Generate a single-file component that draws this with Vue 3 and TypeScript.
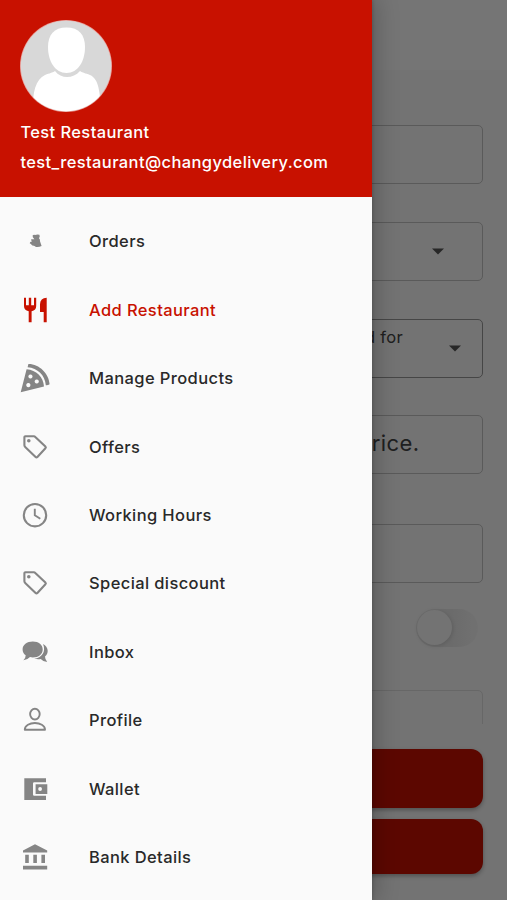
<script setup lang="ts">
import { ref } from 'vue'

interface MenuItem {
  label: string
  icon: string
}

const items: MenuItem[] = [
  { label: 'Orders', icon: 'orders' },
  { label: 'Add Restaurant', icon: 'restaurant' },
  { label: 'Manage Products', icon: 'pizza' },
  { label: 'Offers', icon: 'tag' },
  { label: 'Working Hours', icon: 'clock' },
  { label: 'Special discount', icon: 'tag' },
  { label: 'Inbox', icon: 'chat' },
  { label: 'Profile', icon: 'person' },
  { label: 'Wallet', icon: 'wallet' },
  { label: 'Bank Details', icon: 'bank' },
]
const active = ref('Add Restaurant')
</script>

<template>
  <div class="screen">
    <main class="page">
      <div class="appbar"></div>
      <div class="form">
        <div class="field"></div>
        <div class="field select">
          <svg class="caret near" viewBox="0 0 12 7"><path d="M0 .5h12L6 6.5z" /></svg>
        </div>
        <div class="field select strong">
          <span class="hint">Services you need for</span>
          <svg class="caret" viewBox="0 0 12 7"><path d="M0 .5h12L6 6.5z" /></svg>
        </div>
        <div class="field price"><span>price.</span></div>
        <div class="field spaced"></div>
        <div class="switch"><span class="knob"></span></div>
        <div class="card"></div>
      </div>
      <div class="actions">
        <button class="save"></button>
        <button class="second"></button>
      </div>
    </main>
    <div class="scrim"></div>
    <aside class="drawer">
      <header class="head">
        <svg class="avatar" viewBox="0 0 92 92">
          <defs><clipPath id="round"><circle cx="46" cy="46" r="45.2" /></clipPath></defs>
          <circle cx="46" cy="46" r="46" fill="#eaa09a" />
          <g clip-path="url(#round)">
            <rect width="92" height="92" fill="#d8d8d8" />
            <path d="M13 92C12 72 16 59 25 55C30 53 32 53 35 51C41 59 53 59 60 51C63 53 65 53 70 55C79 59 80 72 81 92Z" fill="#fff" />
            <path d="M46.5 7.5C59 7.5 65 15 65 27C65 41 58 53 46.5 53C35 53 28 41 28 27C28 15 34 7.5 46.5 7.5Z" fill="#fff" />
          </g>
        </svg>
        <div class="name">Test Restaurant</div>
        <div class="mail">test_restaurant@changydelivery.com</div>
      </header>
      <nav class="menu">
        <a v-for="item in items" :key="item.label" class="item" :class="{ active: item.label === active }" @click="active = item.label">
          <svg class="icon" viewBox="0 0 30 30">
            <path v-if="item.icon === 'orders'" d="M12.6 9.6Q13.2 8.6 15 8.9Q17.5 8.2 19.4 8.8Q20.3 10.5 19 12.2Q20.3 13.4 20 15.2L21.6 20Q19 21.4 16 21Q14.5 19.2 12.3 19.4Q10.8 17.8 9.7 17.2Q9.9 15.2 12 15.4Q10.8 13.9 11.2 13.2L14.4 13.2Q12.2 11.5 12.6 9.6Z" />
            <template v-else-if="item.icon === 'restaurant'">
              <path d="M4 2.7H6V10.3H8.8V2.7H11.2V10.3H14V2.7H16.2V11Q16.2 15.2 11.6 16.2V27.3H8.7V16.2Q4 15.2 4 11Z" />
              <path d="M26.7 2.7V27.3H23.7V17H20V9.2Q20.2 3 26.7 2.7Z" />
            </template>
            <template v-else-if="item.icon === 'pizza'">
              <path d="M8.4.9C19 .7 29.2 10.5 29.6 21.3Q27.8 22.6 25.8 22.3C25 12 17.6 5.2 7.6 4.3Z" />
              <path fill-rule="evenodd" d="M6.6 6.2C16.2 7 23.4 13.8 24 23.5L.7 29.2ZM10.4 11.4a2.1 2.1 0 1 0 .1 0ZM16.7 16.4a2.1 2.1 0 1 0 .1 0ZM8.3 20a2.1 2.1 0 1 0 .1 0Z" />
            </template>
            <g v-else-if="item.icon === 'tag'">
              <path class="line" d="M5.4 4.3H13.9Q14.7 4.3 15.3 4.9L25.4 14.5Q26.3 15.4 25.4 16.3L17.4 25Q16.5 25.9 15.6 25L5.2 14.9Q4.4 14.2 4.4 13.3V5.3Q4.4 4.3 5.4 4.3Z" />
              <circle cx="8.8" cy="8.7" r="1.8" />
            </g>
            <g v-else-if="item.icon === 'clock'">
              <circle class="line" cx="15" cy="15.2" r="11.2" />
              <path class="line thin" d="M14.8 8.7V15.3L20.3 18.8" />
            </g>
            <template v-else-if="item.icon === 'chat'">
              <path d="M12.8 4.4C18.8 4.4 22.7 7.9 22.7 12.4C22.7 17 18.8 20.4 12.8 20.4Q11.4 20.4 10 20.1Q7.3 23.2 3.4 23.2Q5.8 20.8 5.7 18.3Q2.6 16 2.6 12.4C2.6 7.9 6.8 4.4 12.8 4.4Z" />
              <path d="M23 6.9C28.8 10 29 16.2 25 19.5Q24.9 22 27.2 24.9Q22.8 24.6 20.7 22Q17.6 22.5 14.2 21.6C21.5 21 26.4 14.6 23 6.9Z" />
            </template>
            <g v-else-if="item.icon === 'person'">
              <ellipse class="line thin" cx="14.9" cy="9.1" rx="4.8" ry="5.4" />
              <path class="line thin" stroke-linejoin="round" d="M4.8 24.8C4.8 15.8 25 15.8 25 24.8Z" />
            </g>
            <path v-else-if="item.icon === 'wallet'" fill-rule="evenodd" d="M4.3 4.2H26V8.2H14.2Q13 8.2 13 9.4V20.6Q13 21.8 14.2 21.8H26V26H4.3ZM15.6 10.2H27.3V19.9H15.6ZM18.2 15a1.9 1.9 0 1 0 3.8 0a1.9 1.9 0 1 0-3.8 0Z" />
            <path v-else d="M15 2.2L27.2 8.4V10.6H3V8.4ZM5.2 12.8H8.8V21H5.2ZM13.3 12.8H16.9V21H13.3ZM21.4 12.8H25V21H21.4ZM3 23.7H27.2V27.4H3Z" />
          </svg>
          <span class="label">{{ item.label }}</span>
        </a>
      </nav>
    </aside>
  </div>
</template>

<style>
body {
  margin: 0;
  overflow: hidden;
}
</style>

<style scoped>
.screen {
  position: relative;
  width: 507px;
  height: 900px;
  overflow: hidden;
  font-family: Inter, 'Liberation Sans', sans-serif;
}
.page {
  display: flex;
  flex-direction: column;
  box-sizing: border-box;
  height: 900px;
  background: #fafafa;
}
.appbar {
  flex: none;
  height: 70px;
  background: #fff;
}
.form {
  display: flex;
  flex-direction: column;
  flex: none;
  box-sizing: border-box;
  height: 654px;
  padding: 55px 24.5px 0;
  overflow: hidden;
}
.field {
  flex: none;
  box-sizing: border-box;
  height: 59px;
  margin-bottom: 38px;
  border: 1.5px solid #c4c4c4;
  border-radius: 5px;
}
.select {
  display: flex;
  justify-content: flex-end;
  align-items: center;
  padding-right: 20.5px;
  margin-bottom: 37.5px;
}
.select.strong {
  gap: 46px;
  border-color: #989898;
}
.hint {
  align-self: flex-start;
  margin-top: 7px;
  font-size: 16.5px;
  line-height: 20px;
  letter-spacing: 0.3px;
  color: #444;
}
.caret {
  width: 12px;
  height: 7px;
  fill: #555;
}
.caret.near {
  margin-right: 17px;
}
.price {
  display: flex;
  justify-content: flex-end;
  align-items: center;
  padding-right: 62px;
  margin-bottom: 49.5px;
  font-size: 22px;
  letter-spacing: 0.4px;
  color: #444;
}
.price span {
  margin-top: -4px;
}
.spaced {
  margin-bottom: 26.5px;
}
.switch {
  flex: none;
  align-self: flex-end;
  box-sizing: border-box;
  width: 62px;
  height: 38px;
  padding: 1px;
  margin-right: 5px;
  border-radius: 19px;
  background: linear-gradient(90deg, #e9e9e9 55%, #f6f6f6);
}
.knob {
  display: block;
  width: 35px;
  height: 35px;
  border-radius: 50%;
  background: #fafafa;
  box-shadow: 1px 1px 4px rgba(0, 0, 0, 0.13);
}
.card {
  flex: none;
  height: 60px;
  margin-top: 43px;
  border: 1.5px solid #e0e0e0;
  border-radius: 5px;
}
.actions {
  display: flex;
  flex-direction: column;
  gap: 11.5px;
  padding: 24.5px 24.5px 0;
}
.actions button {
  padding: 0;
  border: 0;
  border-radius: 12px;
  background: #c81100;
  box-shadow: 0 2px 4px rgba(0, 0, 0, 0.3);
}
.save {
  height: 59px;
}
.second {
  height: 55px;
}
.scrim {
  position: absolute;
  inset: 0;
  background: rgba(0, 0, 0, 0.54);
}
.drawer {
  position: absolute;
  top: 0;
  bottom: 0;
  left: 0;
  width: 372.4px;
  background: #fafafa;
  box-shadow: 2px 0 22px 2px rgba(0, 0, 0, 0.22), 1px 0 3px rgba(0, 0, 0, 0.15);
}
.head {
  box-sizing: border-box;
  height: 197.4px;
  padding: 20.4px 20.4px 0;
  background: #c81100;
  color: #fff;
  font-size: 16.5px;
  font-weight: 500;
  line-height: 20px;
  letter-spacing: 0.39px;
}
.avatar {
  display: block;
  width: 92px;
  height: 92px;
}
.name {
  margin-top: 9.3px;
}
.mail {
  margin-top: 10.5px;
}
.menu {
  display: flex;
  flex-direction: column;
  padding-top: 9.8px;
}
.item {
  display: flex;
  align-items: center;
  gap: 39px;
  height: 68.4px;
  padding-left: 20px;
  color: #292929;
  cursor: pointer;
}
.icon {
  flex: none;
  width: 30px;
  height: 30px;
  fill: #858585;
}
.line {
  fill: none;
  stroke: #858585;
  stroke-width: 2.1;
}
.thin {
  stroke-width: 1.9;
}
.label {
  font-size: 16.5px;
  font-weight: 500;
  line-height: 20px;
  letter-spacing: 0.39px;
}
.active {
  color: #c81100;
}
.active .icon {
  fill: #c81100;
}
</style>
